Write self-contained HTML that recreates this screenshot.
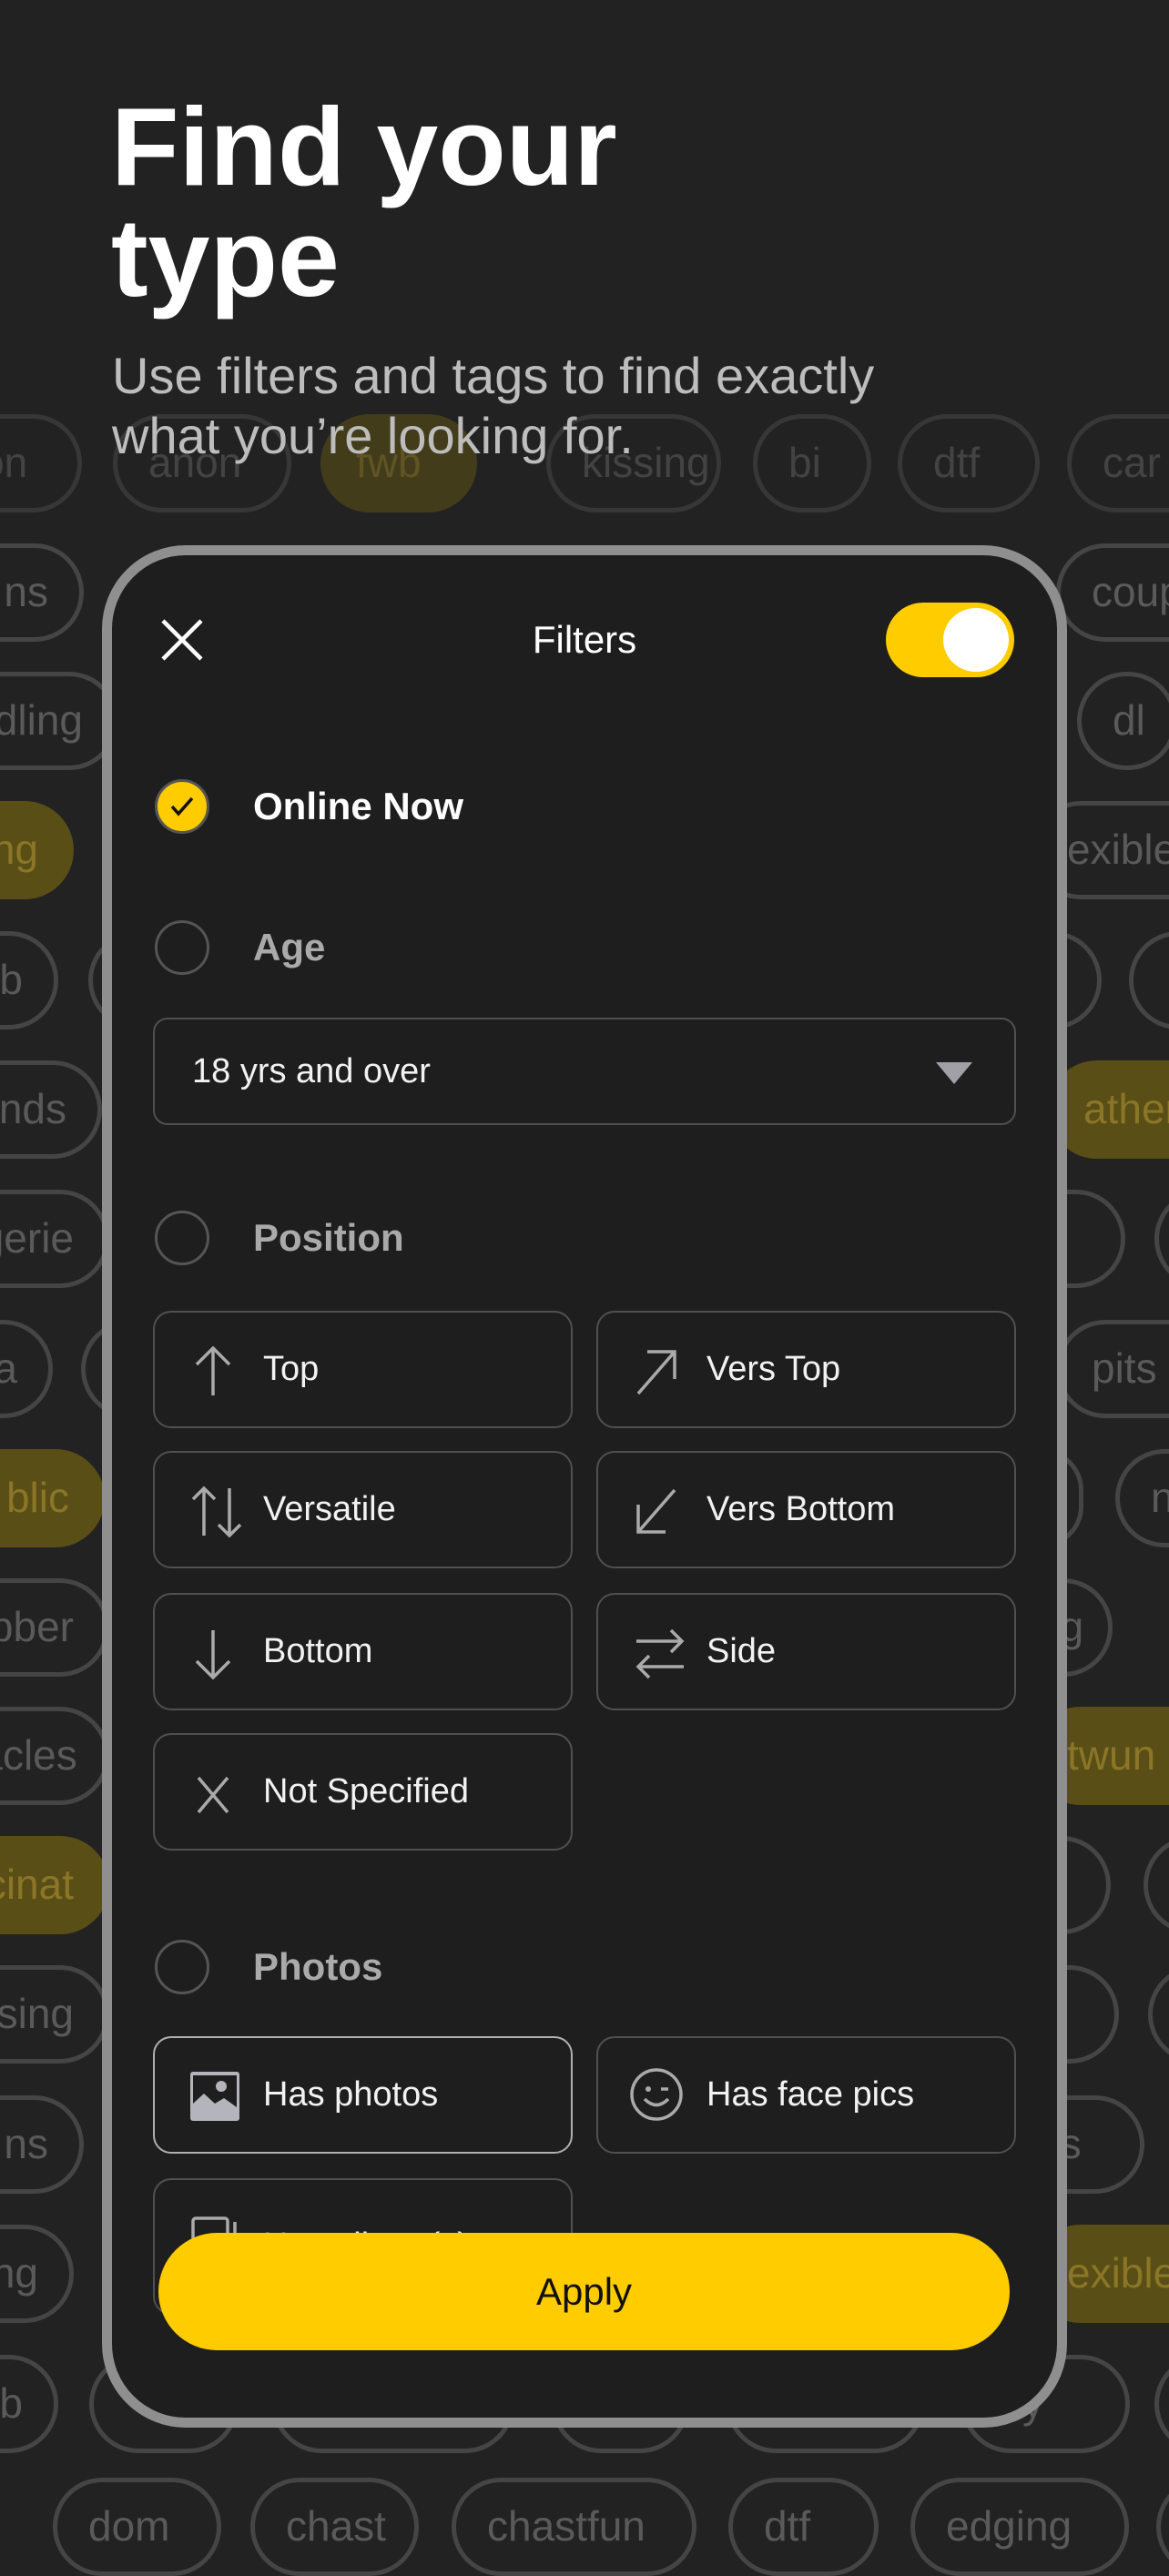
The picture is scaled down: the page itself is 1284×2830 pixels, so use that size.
<!DOCTYPE html>
<html><head><meta charset="utf-8"><style>
*{margin:0;padding:0;box-sizing:border-box}
body{width:1284px;height:2778px;background:#222222;position:relative;overflow:hidden;font-family:"Liberation Sans",sans-serif}
.p{position:absolute;height:108px;border:5px solid #454545;border-radius:60px;color:#5a5a5a;font-size:46px;line-height:96px;padding:0 34px;white-space:nowrap;overflow:hidden}
.l{text-align:right}
.y{background:#5a4e17;border-color:#5a4e17;color:#8a7626}
.top{opacity:.6}
.a{position:absolute}
.card{position:absolute;left:112px;top:599px;width:1060px;height:2068px;border:11px solid #8f8f8f;border-radius:92px;background:#1e1e1e}
.t{position:absolute;color:#fff;white-space:nowrap}
.circ{position:absolute;width:60px;height:60px;border-radius:50%;border:3px solid #555}
.sec{position:absolute;font-size:42px;font-weight:bold;color:#aaa}
.btn{position:absolute;width:461px;height:129px;border:2.5px solid #505050;border-radius:20px}
.btn span{position:absolute;left:119px;top:0;line-height:124px;font-size:38px;color:#f2f2f2}
.btn svg{position:absolute;left:40px;top:37px}
</style></head><body>

<!-- background tags -->
<div class="p top" style="left:-60px;top:455px;width:150px">on</div>
<div class="p top" style="left:124px;top:455px;width:196px">anon</div>
<div class="p y top" style="left:352px;top:455px;width:172px">fwb</div>
<div class="p top" style="left:600px;top:455px;width:192px">kissing</div>
<div class="p top" style="left:827px;top:455px;width:130px">bi</div>
<div class="p top" style="left:986px;top:455px;width:156px">dtf</div>
<div class="p top" style="left:1172px;top:455px;width:200px">car</div>

<div class="p l" style="left:-100px;top:597px;width:192px">ns</div>
<div class="p" style="left:1160px;top:597px;width:220px">couple</div>
<div class="p l" style="left:-120px;top:738px;width:250px">ddling</div>
<div class="p" style="left:1183px;top:738px;width:110px">dl</div>
<div class="p l y" style="left:-100px;top:880px;width:181px">ng</div>
<div class="p" style="left:1133px;top:880px;width:220px">exible</div>
<div class="p l" style="left:-100px;top:1023px;width:164px">b</div>
<div class="p" style="left:97px;top:1023px;width:150px"></div>
<div class="p" style="left:1100px;top:1023px;width:110px"></div>
<div class="p" style="left:1240px;top:1023px;width:150px"></div>
<div class="p l" style="left:-100px;top:1165px;width:212px">nds</div>
<div class="p y" style="left:1151px;top:1165px;width:220px">ather</div>
<div class="p l" style="left:-100px;top:1307px;width:220px">gerie</div>
<div class="p" style="left:1100px;top:1307px;width:136px">y</div>
<div class="p" style="left:1268px;top:1307px;width:120px"></div>
<div class="p l" style="left:-100px;top:1450px;width:158px">a</div>
<div class="p" style="left:89px;top:1450px;width:150px"></div>
<div class="p" style="left:1160px;top:1450px;width:200px">pits</div>
<div class="p l y" style="left:-100px;top:1592px;width:215px">blic</div>
<div class="p" style="left:1100px;top:1592px;width:90px"></div>
<div class="p" style="left:1225px;top:1592px;width:150px">n</div>
<div class="p l" style="left:-100px;top:1734px;width:220px">bber</div>
<div class="p" style="left:1100px;top:1734px;width:122px">ng</div>
<div class="p l" style="left:-100px;top:1875px;width:220px">ntacles</div>
<div class="p y" style="left:1133px;top:1875px;width:220px">twun</div>
<div class="p l y" style="left:-100px;top:2017px;width:220px">ccinat</div>
<div class="p" style="left:1100px;top:2017px;width:120px">n</div>
<div class="p" style="left:1256px;top:2017px;width:120px"></div>
<div class="p l" style="left:-100px;top:2159px;width:220px">sing</div>
<div class="p" style="left:1100px;top:2159px;width:129px">y</div>
<div class="p" style="left:1261px;top:2159px;width:120px"></div>
<div class="p l" style="left:-100px;top:2302px;width:192px">ns</div>
<div class="p" style="left:1100px;top:2302px;width:157px">ns</div>
<div class="p l" style="left:-100px;top:2444px;width:181px">ng</div>
<div class="p" style="left:112px;top:2444px;width:150px"></div>
<div class="p y" style="left:1133px;top:2444px;width:220px">exible</div>
<div class="p l" style="left:-100px;top:2587px;width:164px">b</div>
<div class="p" style="left:98px;top:2587px;width:164px"></div>
<div class="p" style="left:299px;top:2587px;width:266px">g</div>
<div class="p" style="left:606px;top:2587px;width:151px"></div>
<div class="p" style="left:798px;top:2587px;width:217px">y</div>
<div class="p" style="left:1056px;top:2587px;width:185px">rty</div>
<div class="p" style="left:1268px;top:2587px;width:150px"></div>
<div class="p" style="left:58px;top:2722px;width:185px">dom</div>
<div class="p" style="left:275px;top:2722px;width:185px">chast</div>
<div class="p" style="left:496px;top:2722px;width:269px">chastfun</div>
<div class="p" style="left:800px;top:2722px;width:165px">dtf</div>
<div class="p" style="left:1000px;top:2722px;width:240px">edging</div>
<div class="p" style="left:1270px;top:2722px;width:150px"></div>

<!-- heading -->
<div class="t" style="left:122px;top:100px;font-size:122px;font-weight:bold;line-height:122px">Find your<br>type</div>
<div class="t" style="left:123px;top:380px;font-size:56px;line-height:66px;color:#bdbdbd">Use filters and tags to find exactly<br>what you’re looking for.</div>

<!-- card -->
<div class="card"></div>
<svg class="a" style="left:176px;top:679px" width="48" height="48" viewBox="0 0 48 48"><path d="M3 3L45 45M45 3L3 45" stroke="#fff" stroke-width="4.5"/></svg>
<div class="t" style="left:0;width:1284px;text-align:center;top:678px;font-size:42px;line-height:50px">Filters</div>
<div class="a" style="left:973px;top:662px;width:141px;height:82px;border-radius:41px;background:#ffcc00"></div>
<div class="a" style="left:1036px;top:668px;width:72px;height:70px;border-radius:50%;background:#fff"></div>

<div class="a" style="left:170px;top:856px;width:60px;height:60px;border-radius:50%;background:#ffcc00;border:3px solid #555"></div>
<svg class="a" style="left:184px;top:872px" width="32" height="28" viewBox="0 0 32 28"><path d="M5 14L12 22L27 5" stroke="#111" stroke-width="3.5" fill="none"/></svg>
<div class="t" style="left:278px;top:860px;font-size:42px;font-weight:bold;line-height:52px">Online Now</div>

<div class="circ" style="left:170px;top:1011px"></div>
<div class="sec" style="left:278px;top:1015px;line-height:52px">Age</div>
<div class="a" style="left:168px;top:1118px;width:948px;height:118px;border:2.5px solid #505050;border-radius:16px"></div>
<div class="t" style="left:211px;top:1153px;font-size:38px;line-height:48px;color:#f2f2f2">18 yrs and over</div>
<svg class="a" style="left:1028px;top:1167px" width="40" height="24" viewBox="0 0 40 24"><path d="M0 0H40L20 24Z" fill="#a0a0a6"/></svg>

<div class="circ" style="left:170px;top:1330px"></div>
<div class="sec" style="left:278px;top:1334px;line-height:52px">Position</div>

<div class="btn" style="left:168px;top:1440px"><svg width="48" height="56" viewBox="0 0 48 56"><path d="M24 54V2M6 20L24 2L42 20" stroke="#aaa" stroke-width="3.5" fill="none"/></svg><span>Top</span></div>
<div class="btn" style="left:655px;top:1440px"><svg width="48" height="56" viewBox="0 0 48 56"><path d="M4 52L44 6M14 6H44V36" stroke="#aaa" stroke-width="3.5" fill="none"/></svg><span>Vers Top</span></div>
<div class="btn" style="left:168px;top:1594px"><svg width="56" height="56" viewBox="0 0 56 56"><path d="M14 54V2M2 14L14 2L26 14M42 2V54M30 42L42 54L54 42" stroke="#aaa" stroke-width="3.5" fill="none"/></svg><span>Versatile</span></div>
<div class="btn" style="left:655px;top:1594px"><svg width="48" height="56" viewBox="0 0 48 56"><path d="M44 4L4 50M4 20V50H34" stroke="#aaa" stroke-width="3.5" fill="none"/></svg><span>Vers Bottom</span></div>
<div class="btn" style="left:168px;top:1750px"><svg width="48" height="56" viewBox="0 0 48 56"><path d="M24 2V54M6 36L24 54L42 36" stroke="#aaa" stroke-width="3.5" fill="none"/></svg><span>Bottom</span></div>
<div class="btn" style="left:655px;top:1750px"><svg width="56" height="56" viewBox="0 0 56 56"><path d="M2 14H52M40 2L52 14L40 26M54 42H4M16 30L4 42L16 54" stroke="#aaa" stroke-width="3.5" fill="none"/></svg><span>Side</span></div>
<div class="btn" style="left:168px;top:1904px"><svg width="48" height="56" viewBox="0 0 48 56"><path d="M8 10L40 48M40 10L8 48" stroke="#aaa" stroke-width="3.5" fill="none"/></svg><span>Not Specified</span></div>

<div class="circ" style="left:170px;top:2131px"></div>
<div class="sec" style="left:278px;top:2135px;line-height:52px">Photos</div>

<div class="btn" style="left:168px;top:2237px;border-color:#b0b0b0"><svg width="56" height="56" viewBox="0 0 56 56" style="left:38px;top:36px"><rect x="1" y="1" width="54" height="54" rx="3" fill="#b4b4bc"/><rect x="4" y="5" width="48" height="44" fill="#1e1e1e"/><circle cx="35" cy="17" r="6" fill="#b4b4bc"/><path d="M4 36L16 25L28 36L38 30L52 40V52H4Z" fill="#b4b4bc"/></svg><span>Has photos</span></div>
<div class="btn" style="left:655px;top:2237px"><svg width="60" height="60" viewBox="0 0 60 60" style="left:34px;top:32px"><circle cx="30" cy="30" r="27" stroke="#aaa" stroke-width="3.5" fill="none"/><path d="M17 35Q30 48 43 35" stroke="#aaa" stroke-width="3.5" fill="none"/><circle cx="21" cy="24" r="3" fill="#aaa"/><path d="M35 24H43" stroke="#aaa" stroke-width="3.5"/></svg><span>Has face pics</span></div>
<div class="btn" style="left:168px;top:2393px;height:150px;overflow:hidden"><svg width="56" height="60" viewBox="0 0 56 60" style="left:40px;top:40px"><rect x="2" y="2" width="38" height="50" rx="3" stroke="#aaa" stroke-width="3.5" fill="none"/><path d="M48 6V58" stroke="#aaa" stroke-width="3.5"/></svg><span style="top:10px">Has album(s)</span></div>

<div class="a" style="left:174px;top:2453px;width:935px;height:129px;border-radius:65px;background:#ffcc00"></div>
<div class="t" style="left:174px;width:935px;text-align:center;top:2492px;font-size:42px;line-height:52px;color:#111">Apply</div>
</body></html>
